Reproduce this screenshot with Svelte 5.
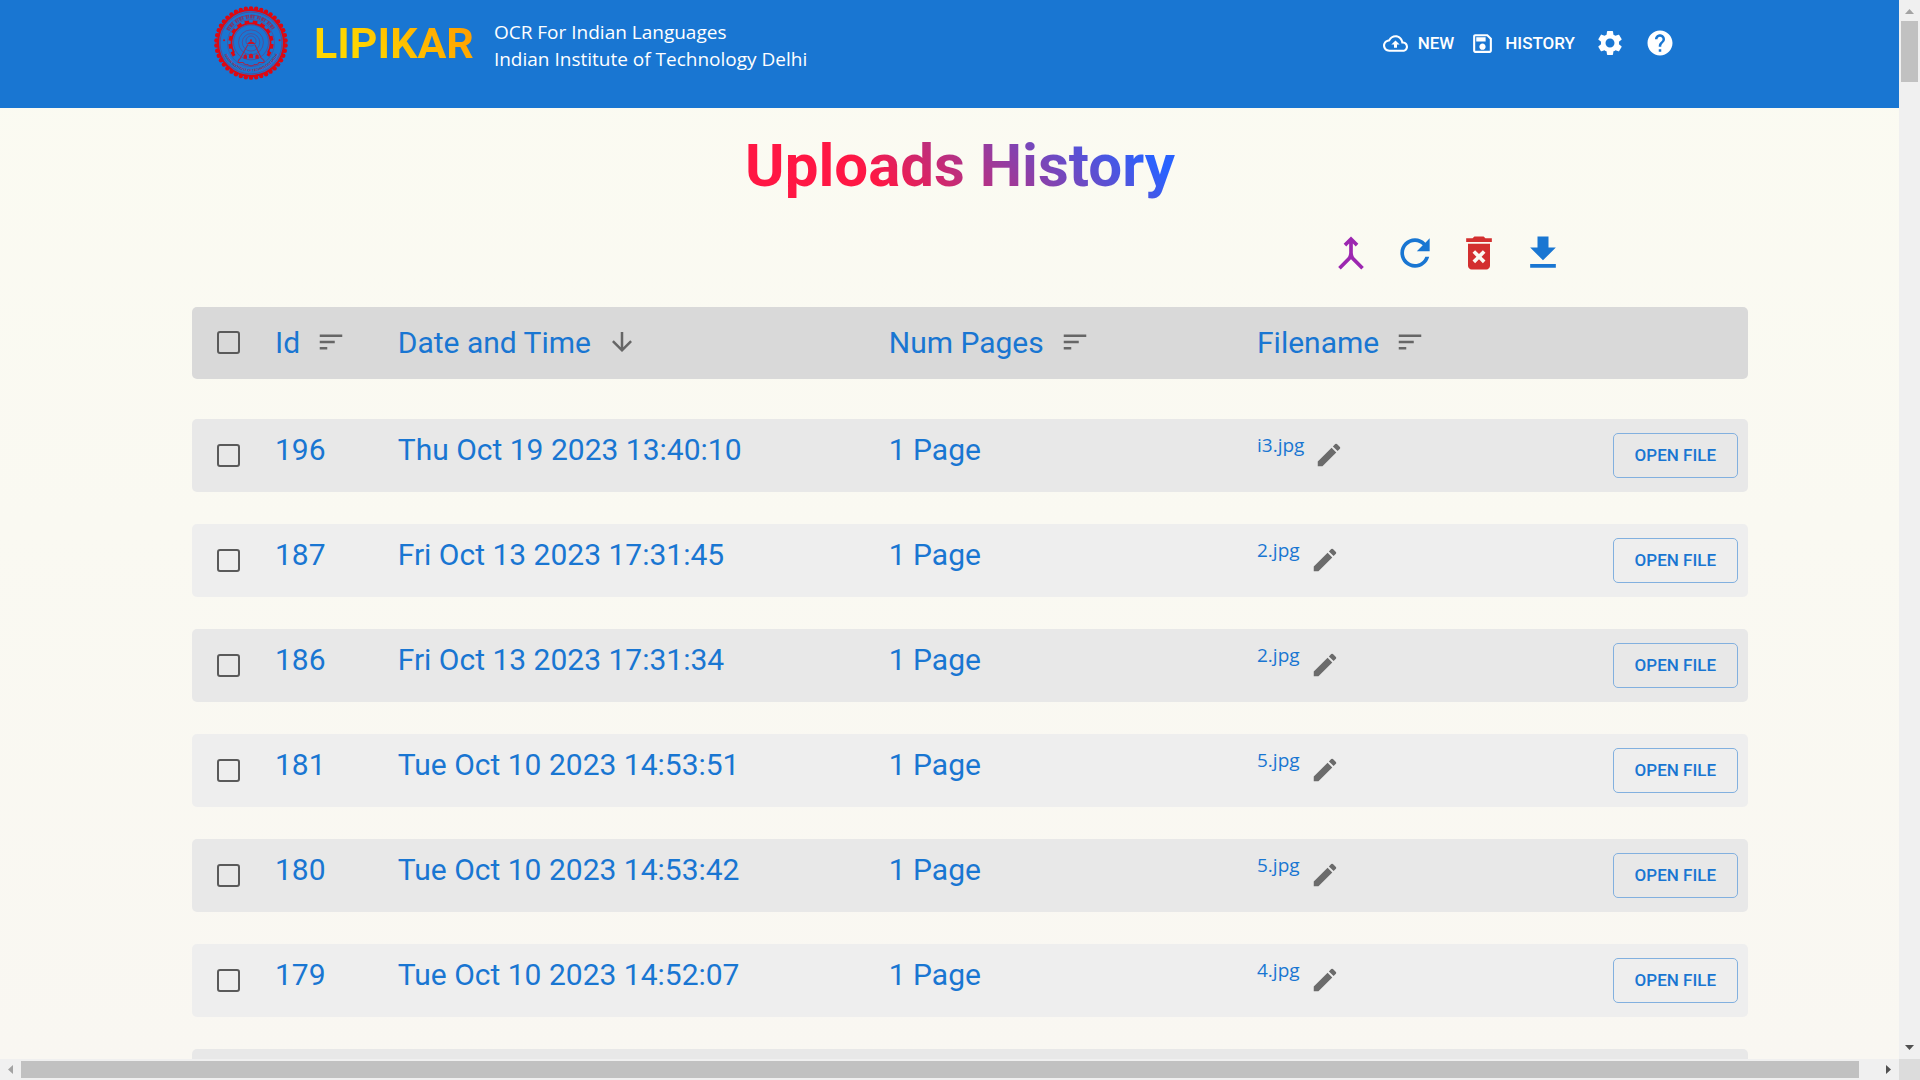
<script lang="ts">
  type Upload = { id: number; date: string; pages: string; file: string };

  const uploads: Upload[] = [
    { id: 196, date: 'Thu Oct 19 2023 13:40:10', pages: '1 Page', file: 'i3.jpg' },
    { id: 187, date: 'Fri Oct 13 2023 17:31:45', pages: '1 Page', file: '2.jpg' },
    { id: 186, date: 'Fri Oct 13 2023 17:31:34', pages: '1 Page', file: '2.jpg' },
    { id: 181, date: 'Tue Oct 10 2023 14:53:51', pages: '1 Page', file: '5.jpg' },
    { id: 180, date: 'Tue Oct 10 2023 14:53:42', pages: '1 Page', file: '5.jpg' },
    { id: 179, date: 'Tue Oct 10 2023 14:52:07', pages: '1 Page', file: '4.jpg' }
  ];

  const sortPath = 'M3 18h6v-2H3v2zM3 6v2h18V6H3zm0 7h12v-2H3v2z';
  const downPath = 'm20 12-1.41-1.41L13 16.17V4h-2v12.17l-5.58-5.59L4 12l8 8 8-8z';

  const columns = [
    { name: 'Id', icon: sortPath },
    { name: 'Date and Time', icon: downPath },
    { name: 'Num Pages', icon: sortPath },
    { name: 'Filename', icon: sortPath }
  ];

  const tools = [
    { name: 'Merge', tone: 'purple', path: 'M6.41 21 5 19.59l4.83-4.83c.75-.75 1.17-1.77 1.17-2.83v-5.1L9.41 8.41 8 7l4-4 4 4-1.41 1.41L13 6.83v5.1c0 1.06.42 2.08 1.17 2.83L19 19.59 17.59 21 12 15.41 6.41 21z' },
    { name: 'Refresh', tone: 'blue', path: 'M17.65 6.35C16.2 4.9 14.21 4 12 4c-4.42 0-7.99 3.58-7.99 8s3.57 8 7.99 8c3.73 0 6.84-2.55 7.73-6h-2.08c-.82 2.33-3.04 4-5.65 4-3.31 0-6-2.69-6-6s2.69-6 6-6c1.66 0 3.14.69 4.22 1.78L13 11h7V4l-2.35 2.35z' },
    { name: 'Delete', tone: 'red', path: 'M6 19c0 1.1.9 2 2 2h8c1.1 0 2-.9 2-2V7H6v12zm2.46-7.12 1.41-1.41L12 12.59l2.12-2.12 1.41 1.41L13.41 14l2.12 2.12-1.41 1.41L12 15.41l-2.12 2.12-1.41-1.41L10.59 14l-2.13-2.12zM15.5 4l-1-1h-5l-1 1H5v2h14V4z' },
    { name: 'Download', tone: 'blue', path: 'M19 9h-4V3H9v6H5l7 7 7-7zM5 18v2h14v-2H5z' }
  ];

  const ring = (n: number, r: number) =>
    Array.from({ length: n }, (_, i) => {
      const a = (i / n) * Math.PI * 2;
      return { x: 110 + r * Math.sin(a), y: 110 - r * Math.cos(a) };
    });
  const scallops = ring(42, 103);
  const teeth = Array.from({ length: 12 }, (_, i) => -121 + i * 22);
</script>

{#snippet icon(path: string)}
  <svg viewBox="0 0 24 24" aria-hidden="true"><path d={path} /></svg>
{/snippet}

<div class="window">
  <div class="pane">
    <div class="page">
      <header>
        <svg class="logo" viewBox="0 0 220 220" role="img" aria-label="IIT Delhi">
          {#each scallops as s}
            <circle cx={s.x} cy={s.y} r="6.6" fill="#dc0812" />
          {/each}
          <g fill="none" stroke="#dc0812">
            <circle cx="110" cy="110" r="98" stroke-width="6" />
            <g stroke="#6b3c7e" stroke-width="2">
              <circle cx="110" cy="110" r="92" />
              <circle cx="110" cy="110" r="70" stroke-width="1.5" />
              <circle cx="110" cy="108" r="52" />
              <circle cx="110" cy="108" r="37" />
              <circle cx="110" cy="108" r="26" />
              <circle cx="110" cy="104" r="15" />
            </g>
            <path d="M60 139A58 58 0 1 1 160 139" stroke-width="5" />
            {#each teeth as a}
              <path d="M110 52V43" stroke-width="14" transform="rotate({a} 110 110)" />
            {/each}
            <path d="M41 72A79 79 0 0 1 179 72" stroke="#7c356a" stroke-width="11" stroke-dasharray="5 2 3 3 7 2 4 8" />
            <path d="M38 67A85 85 0 0 1 182 67" stroke="#8c2f5a" stroke-width="2" stroke-dasharray="30 8 40 8" />
            <path d="M100 116 78 156q-8 6-6 12l14 0q6 8 14 6 10 8 20 0 10 2 14-6l14 0q4-6-8-14L122 116" stroke="#a5254a" stroke-width="3" />
          </g>
          <g fill="#c81228">
            <path d="M98 113q12-17 25 0z" />
            <circle cx="110" cy="102" r="3" />
            <path d="M88 157v-9q5-9 10 0v9zM104 155v-9q6-9 12 0v9zM123 157v-9q5-9 10 0v9z" />
            <circle cx="30" cy="102" r="3" />
            <circle cx="195" cy="102" r="3" />
          </g>
          <path id="seal-arc" d="M25 126A87 87 0 0 0 195 126" fill="none" />
          <text class="seal"><textPath href="#seal-arc" startOffset="50%" text-anchor="middle">INDIAN INSTITUTE OF TECHNOLOGY DELHI</textPath></text>
        </svg>
        <a class="brand" href="#home">LIPIKAR</a>
        <p>OCR For Indian Languages<br />Indian Institute of Technology Delhi</p>
        <nav>
          <a href="#new">
            {@render icon('M19.35 10.04C18.67 6.59 15.64 4 12 4 9.11 4 6.6 5.64 5.35 8.04 2.34 8.36 0 10.91 0 14c0 3.31 2.69 6 6 6h13c2.76 0 5-2.24 5-5 0-2.64-2.05-4.78-4.65-4.96zM19 18H6c-2.21 0-4-1.79-4-4 0-2.05 1.53-3.76 3.56-3.97l1.07-.11.5-.95C8.08 7.14 9.94 6 12 6c2.62 0 4.88 1.86 5.39 4.43l.3 1.5 1.53.11c1.56.1 2.78 1.41 2.78 2.96 0 1.65-1.35 3-3 3zM8 13h2.55v3h2.9v-3H16l-4-4z')}
            NEW
          </a>
          <a href="#history">
            {@render icon('M17 3H5c-1.11 0-2 .9-2 2v14c0 1.1.89 2 2 2h14c1.1 0 2-.9 2-2V7l-4-4zm2 16H5V5h11.17L19 7.83V19zm-7-7c-1.66 0-3 1.34-3 3s1.34 3 3 3 3-1.34 3-3-1.34-3-3-3zM6 6h9v4H6z')}
            HISTORY
          </a>
          <button aria-label="Settings">
            {@render icon('M19.14 12.94c.04-.3.06-.61.06-.94 0-.32-.02-.64-.07-.94l2.03-1.58c.18-.14.23-.41.12-.61l-1.92-3.32c-.12-.22-.37-.29-.59-.22l-2.39.96c-.5-.38-1.03-.7-1.62-.94l-.36-2.54c-.04-.24-.24-.41-.48-.41h-3.84c-.24 0-.43.17-.47.41l-.36 2.54c-.59.24-1.13.57-1.62.94l-2.39-.96c-.22-.08-.47 0-.59.22L2.74 8.87c-.12.21-.08.47.12.61l2.03 1.58c-.05.3-.09.63-.09.94s.02.64.07.94l-2.03 1.58c-.18.14-.23.41-.12.61l1.92 3.32c.12.22.37.29.59.22l2.39-.96c.5.38 1.03.7 1.62.94l.36 2.54c.05.24.24.41.48.41h3.84c.24 0 .44-.17.47-.41l.36-2.54c.59-.24 1.13-.56 1.62-.94l2.39.96c.22.08.47 0 .59-.22l1.92-3.32c.12-.22.07-.47-.12-.61l-2.01-1.58zM12 15.6c-1.98 0-3.6-1.62-3.6-3.6s1.62-3.6 3.6-3.6 3.6 1.62 3.6 3.6-1.62 3.6-3.6 3.6z')}
          </button>
          <button aria-label="Help">
            {@render icon('M12 2C6.48 2 2 6.48 2 12s4.48 10 10 10 10-4.48 10-10S17.52 2 12 2zm1 17h-2v-2h2v2zm2.07-7.75-.9.92C13.45 12.9 13 13.5 13 15h-2v-.5c0-1.1.45-2.1 1.17-2.83l1.24-1.26c.37-.36.59-.86.59-1.41 0-1.1-.9-2-2-2s-2 .9-2 2H8c0-2.21 1.79-4 4-4s4 1.79 4 4c0 .88-.36 1.68-.93 2.25z')}
          </button>
        </nav>
      </header>

      <h1><span>Uploads History</span></h1>

      <main>
        <div class="tools">
          {#each tools as t}
            <button class={t.tone} aria-label={t.name}>{@render icon(t.path)}</button>
          {/each}
        </div>

        <table>
          <thead>
            <tr>
              <th class="check"><input type="checkbox" aria-label="Select all" /></th>
              {#each columns as c}
                <th>{c.name}<button class="sort" aria-label="Sort by {c.name}">{@render icon(c.icon)}</button></th>
              {/each}
            </tr>
          </thead>
          <tbody>
            {#each uploads as u}
              <tr>
                <td class="check"><input type="checkbox" aria-label="Select {u.id}" /></td>
                <td>{u.id}</td>
                <td>{u.date}</td>
                <td>{u.pages}</td>
                <td class="file">
                  <span>{u.file}</span>
                  <button class="edit" aria-label="Rename {u.file}">
                    {@render icon('M3 17.25V21h3.75L17.81 9.94l-3.75-3.75L3 17.25zM20.71 7.04c.39-.39.39-1.02 0-1.41l-2.34-2.34a.9959.9959 0 0 0-1.41 0l-1.83 1.83 3.75 3.75 1.83-1.83z')}
                  </button>
                </td>
                <td class="action"><button class="open">OPEN FILE</button></td>
              </tr>
            {/each}
            <tr><td></td></tr>
          </tbody>
        </table>
      </main>
    </div>
  </div>

  <div class="bar vertical" aria-hidden="true">
    <svg viewBox="0 0 21 21"><path d="M6 14h9l-4.500-5z" fill="#a3a3a3" /></svg>
    <div class="track"><div class="thumb"></div></div>
    <svg viewBox="0 0 21 21"><path d="M6 7h9l-4.500 5z" fill="#505050" /></svg>
  </div>
  <div class="bar horizontal" aria-hidden="true">
    <svg viewBox="0 0 21 21"><path d="M13 6v9l-5-4.500z" fill="#a3a3a3" /></svg>
    <div class="track"><div class="thumb"></div></div>
    <svg viewBox="0 0 21 21"><path d="M8 6v9l5-4.500z" fill="#505050" /></svg>
  </div>
  <div class="corner"></div>
</div>

<style>
  :global(body) {
    overflow: hidden;
    font-family: Roboto, sans-serif;
  }

  svg {
    display: block;
    fill: currentColor;
  }

  button {
    display: flex;
    padding: 0;
    border: 0;
    background: none;
    color: inherit;
    font: inherit;
    cursor: pointer;
  }

  .window {
    display: grid;
    grid-template: minmax(0, 1fr) 21px / minmax(0, 1fr) 21px;
    height: 100vh;
  }

  .pane {
    overflow: hidden;
    background: linear-gradient(#fbfbf2, #f9f7f2);
  }

  .page {
    width: 100vw;
  }

  header {
    display: flex;
    align-items: flex-start;
    box-sizing: border-box;
    min-height: 108px;
    padding: 0 245px 0 214px;
    background: #1976d2;
    color: #fff;
  }

  .logo {
    width: 74px;
    margin-top: 6px;
  }

  .seal {
    fill: #a0284e;
    font-size: 10px;
    font-weight: 700;
  }

  .brand {
    margin: 16px 20px 0 26px;
    background: linear-gradient(45deg, #ffd600 30%, #ffa000 90%);
    background-clip: text;
    color: transparent;
    font-size: 43px;
    font-weight: 700;
    line-height: 54px;
    text-decoration: none;
  }

  p {
    margin: 19px 0 0;
    font: 19px/27px 'Open Sans', sans-serif;
  }

  nav {
    display: flex;
    align-items: center;
    height: 86px;
    margin-left: auto;
    font-size: 17px;
    font-weight: 500;
  }

  nav a {
    display: flex;
    align-items: center;
    gap: 10px;
    margin-right: 16px;
    color: inherit;
    text-decoration: none;
  }

  nav a svg {
    width: 25px;
  }

  nav button {
    margin-left: 20px;
  }

  nav a + button {
    margin-left: 4px;
  }

  nav button svg {
    width: 30px;
  }

  h1 {
    margin: 23px 0 0;
    font-size: 60px;
    font-weight: 700;
    line-height: 70px;
    text-align: center;
  }

  h1 span {
    display: inline-block;
    background: linear-gradient(45deg, #ff1744 30%, #2962ff 90%);
    background-clip: text;
    color: transparent;
  }

  main {
    padding: 0 172px 0 10%;
  }

  .tools {
    display: flex;
    justify-content: flex-end;
    gap: 20px;
    padding: 30px 183px 32px 0;
  }

  .tools svg {
    width: 44px;
  }

  .purple {
    color: #9c27b0;
  }

  .blue {
    color: #1976d2;
  }

  .red {
    color: #d32f2f;
  }

  table {
    display: block;
    color: #1976d2;
    font-size: 30px;
    line-height: 45px;
  }

  thead {
    display: block;
    margin-bottom: 40px;
  }

  tbody {
    display: flex;
    flex-direction: column;
    gap: 32px;
  }

  tr {
    display: grid;
    grid-template-columns: 83px minmax(0, 1fr) minmax(0, 4fr) minmax(0, 3fr) minmax(0, 2fr) minmax(0, 2fr);
    min-height: 73px;
    border-radius: 5px;
    background: #eee;
  }

  tbody tr:nth-child(odd) {
    background: #e8e8e8;
  }

  thead tr {
    min-height: 72px;
    background: #d9d9d9;
  }

  th,
  td {
    padding: 0;
    font-weight: 400;
    text-align: left;
    white-space: nowrap;
  }

  th {
    display: flex;
    align-items: center;
    padding-bottom: 2px;
  }

  td {
    padding-top: 8px;
  }

  .check {
    display: flex;
    align-items: center;
    padding: 0 0 1px 25px;
  }

  input {
    width: 23px;
    height: 23px;
    margin: 0;
    border: 2px solid #5a5a5a;
    border-radius: 3px;
    appearance: none;
  }

  .sort {
    margin-left: 16px;
    color: #666;
  }

  .sort svg,
  .edit svg {
    width: 30px;
  }

  .file {
    display: flex;
    align-items: center;
    gap: 10px;
    padding: 0 0 1px;
  }

  .file span {
    align-self: flex-start;
    padding-top: 13px;
    font: 19px/27px 'Open Sans', sans-serif;
  }

  .edit {
    color: #6b6b6b;
  }

  .action {
    display: flex;
    align-items: center;
    justify-content: flex-end;
    padding: 0 10px 0 0;
  }

  .open {
    padding: 7px 21px;
    border: 1px solid #82b0df;
    border-radius: 5px;
    font-size: 17px;
    font-weight: 500;
    line-height: 29px;
  }

  .bar {
    display: flex;
    background: #f0f0f0;
  }

  .bar svg {
    width: 21px;
    height: 21px;
  }

  .vertical {
    flex-direction: column;
  }

  .track {
    flex: 1;
  }

  .thumb {
    background: #c1c1c1;
  }

  .vertical .thumb {
    height: 6%;
    margin: 0 2px;
  }

  .horizontal {
    grid-row: 2;
  }

  .horizontal .track {
    padding: 2px 0;
  }

  .horizontal .thumb {
    width: 99%;
    height: 17px;
  }

  .corner {
    background: #dcdcdc;
  }
</style>
